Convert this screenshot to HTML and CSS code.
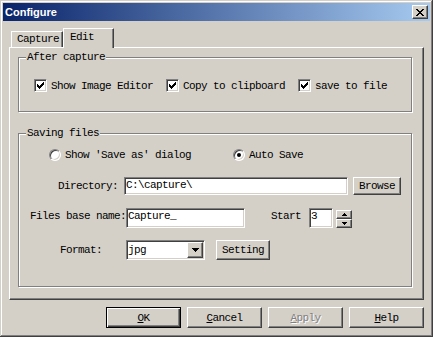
FILE: index.html
```html
<!DOCTYPE html>
<html lang="en">

<head>
    <meta charset="UTF-8">
    <title>Configure</title>
    <link rel="stylesheet" href="styles.css">
</head>

<body>

    <div class="window">

        <div class="titlebar">
            <span class="title">Configure</span>
            <span class="btn close">
                <svg width="8" height="7" viewBox="0 0 8 7" shape-rendering="crispEdges"><path d="M0 0h2v1H0zM6 0h2v1H6zM1 1h2v1H1zM5 1h2v1H5zM2 2h4v1H2zM3 3h2v1H3zM2 4h4v1H2zM1 5h2v1H1zM5 5h2v1H5zM0 6h2v1H0zM6 6h2v1H6z" fill="#000"/></svg>
            </span>
        </div>

        <div class="client">

            <div class="tabs">
                <div class="tab">Capture</div>
                <div class="tab active">Edit</div>
            </div>

            <section class="panel">

                <div class="group g1">
                    <span class="caption">After capture</span>
                    <div class="row checks">
                        <label class="check"><span class="box"><svg width="7" height="7" viewBox="0 0 7 7" shape-rendering="crispEdges"><path d="M0 2h1v1h1v1h1v-1h1v-1h1v-1h1v-1h1v3h-1v1h-1v1h-1v1h-1v1h-1v-1h-1v-1h-1z" fill="#000"/></svg></span>Show Image Editor</label>
                        <label class="check"><span class="box"><svg width="7" height="7" viewBox="0 0 7 7" shape-rendering="crispEdges"><path d="M0 2h1v1h1v1h1v-1h1v-1h1v-1h1v-1h1v3h-1v1h-1v1h-1v1h-1v1h-1v-1h-1v-1h-1z" fill="#000"/></svg></span>Copy to clipboard</label>
                        <label class="check"><span class="box"><svg width="7" height="7" viewBox="0 0 7 7" shape-rendering="crispEdges"><path d="M0 2h1v1h1v1h1v-1h1v-1h1v-1h1v-1h1v3h-1v1h-1v1h-1v1h-1v1h-1v-1h-1v-1h-1z" fill="#000"/></svg></span>save to file</label>
                    </div>
                </div>

                <div class="group g2">
                    <span class="caption">Saving files</span>

                    <div class="row radios">
                        <label class="check"><span class="radio"></span>Show 'Save as' dialog</label>
                        <label class="check"><span class="radio"><span class="dot"></span></span>Auto Save</label>
                    </div>

                    <div class="row r-dir">
                        <span class="lbl w-dir">Directory:</span>
                        <input class="field f-dir" value="C:\capture\">
                        <span class="btn b-browse">Browse</span>
                    </div>

                    <div class="row r-name">
                        <span class="lbl w-name">Files base name:</span>
                        <input class="field f-name" value="Capture_">
                        <span class="lbl w-start">Start</span>
                        <input class="field f-start" value="3">
                        <span class="spin">
                            <span class="btn"><svg width="5" height="3" viewBox="0 0 5 3" shape-rendering="crispEdges"><path d="M2 0h1v1H2zM1 1h3v1H1zM0 2h5v1H0z" fill="#000"/></svg></span>
                            <span class="btn"><svg width="5" height="3" viewBox="0 0 5 3" shape-rendering="crispEdges"><path d="M0 0h5v1H0zM1 1h3v1H1zM2 2h1v1H2z" fill="#000"/></svg></span>
                        </span>
                    </div>

                    <div class="row r-format">
                        <span class="lbl w-format">Format:</span>
                        <div class="field select">
                            <span>jpg</span>
                            <span class="btn drop"><svg width="7" height="4" viewBox="0 0 7 4" shape-rendering="crispEdges"><path d="M0 0h7v1H0zM1 1h5v1H1zM2 2h3v1H2zM3 3h1v1H3z" fill="#000"/></svg></span>
                        </div>
                        <span class="btn b-setting">Setting</span>
                    </div>
                </div>

            </section>

            <footer class="buttons">
                <span class="btn default"><u>O</u>K</span>
                <span class="btn"><u>C</u>ancel</span>
                <span class="btn disabled"><u>A</u>pply</span>
                <span class="btn"><u>H</u>elp</span>
            </footer>

        </div>
    </div>

</body></html>
```

FILE: styles.css
```css
* {
    margin: 0;
    padding: 0;
    box-sizing: border-box;
}

body {
    background: #D4D0C8;
    font-family: "Liberation Mono", monospace;
    font-size: 11px;
    line-height: 12px;
    letter-spacing: -0.6px;
    white-space: nowrap;
    color: #000;
}

.window {
    width: 433px;
    height: 337px;
    padding: 3px;
    background: #D4D0C8;
    box-shadow: inset -1px -1px #404040, inset 1px 1px #D4D0C8, inset -2px -2px #808080, inset 2px 2px #fff;
}

.titlebar {
    height: 18px;
    display: flex;
    align-items: center;
    justify-content: space-between;
    padding: 0 2px;
    background: linear-gradient(to right, #0A246A, #A6CAF0);
}

.title {
    font: bold 11px "Liberation Sans", sans-serif;
    letter-spacing: 0;
    color: #fff;
}

/* raised push button */
.btn {
    display: flex;
    align-items: center;
    justify-content: center;
    background: #D4D0C8;
    border: 1px solid;
    border-color: #fff #404040 #404040 #fff;
    box-shadow: inset -1px -1px #808080;
}

.close {
    width: 16px;
    height: 14px;
}

.client {
    padding: 7px 6px 0;
}

.tabs {
    display: flex;
    align-items: flex-end;
    height: 19px;
    padding-left: 2px;
}

.tab {
    width: 52px;
    height: 16px;
    border: 1px solid;
    border-color: #fff #404040 transparent #fff;
    border-bottom: 0;
    box-shadow: inset -1px 0 #808080;
    padding-left: 5px;
    line-height: 14px;
}

.tab.active {
    width: 51px;
    height: 20px;
    margin-bottom: -1px;
    padding-left: 6px;
    line-height: 16px;
    background: #D4D0C8;
    position: relative;
}

.panel {
    width: 415px;
    height: 253px;
    border: 1px solid;
    border-color: #fff #404040 #404040 #fff;
    box-shadow: inset -1px -1px #808080;
    padding: 9px 0 0 8px;
}

.group {
    position: relative;
    width: 394px;
    border: 1px solid #808080;
    box-shadow: inset 1px 1px #fff, 1px 1px #fff;
}

.g1 {
    height: 55px;
    padding: 21px 0 0 15px;
}

.g2 {
    height: 154px;
    margin-top: 21px;
    padding-top: 14px;
}

.caption {
    position: absolute;
    top: -7px;
    left: 7px;
    padding: 0 1px;
    background: #D4D0C8;
}

.row {
    display: flex;
    align-items: center;
}

.checks {
    height: 13px;
    gap: 13px;
}

.check {
    display: flex;
    align-items: center;
    gap: 4px;
}

/* sunken white boxes */
.box,
.field {
    background: #fff;
    border: 1px solid;
    border-color: #808080 #fff #fff #808080;
    box-shadow: inset 1px 1px #404040, inset -1px -1px #D4D0C8;
}

.box {
    width: 13px;
    height: 13px;
    padding: 2px 0 0 2px;
}

.box svg {
    display: block;
}

.radios {
    height: 13px;
    padding-left: 30px;
    gap: 42px;
}

.radio {
    width: 12px;
    height: 12px;
    border-radius: 50%;
    background: #fff;
    border: 1px solid;
    border-color: #808080 #fff #fff #808080;
    box-shadow: inset 1px 1px #404040, inset -1px -1px #D4D0C8;
    display: flex;
    align-items: center;
    justify-content: center;
}

.dot {
    width: 4px;
    height: 4px;
    border-radius: 50%;
    background: #000;
}

.lbl {
    flex-shrink: 0;
}

.field {
    height: 100%;
    font: inherit;
    letter-spacing: inherit;
    color: #000;
    padding: 0 0 2px 1px;
    outline: none;
}

.r-dir {
    height: 18px;
    margin-top: 16px;
    padding-left: 39px;
}

.w-dir {
    width: 60px;
}

.f-dir {
    width: 224px;
    margin-left: 6px;
}

.b-browse {
    width: 48px;
    height: 18px;
    margin-left: 5px;
}

.r-name {
    height: 20px;
    margin-top: 13px;
    padding-left: 11px;
}

.r-name .lbl {
    align-self: flex-start;
    padding-top: 2px;
}

.r-name .field {
    padding-bottom: 4px;
}

.w-name {
    width: 96px;
}

.f-name {
    width: 119px;
}

.w-start {
    width: 30px;
    margin-left: 26px;
}

.f-start {
    width: 24px;
    margin-left: 8px;
}

.spin {
    display: flex;
    flex-direction: column;
    width: 16px;
    height: 18px;
    margin-left: 3px;
    align-self: flex-end;
}

.spin .btn {
    height: 9px;
}

.r-format {
    height: 20px;
    margin-top: 12px;
    padding-left: 41px;
}

.w-format {
    width: 66px;
}

.select {
    width: 79px;
    display: flex;
    align-items: center;
    justify-content: space-between;
    padding: 0 0 0 1px;
}

.drop {
    width: 16px;
    height: 16px;
    margin-right: 1px;
}

.b-setting {
    width: 54px;
    height: 20px;
    margin-left: 11px;
}

.buttons {
    display: flex;
    justify-content: flex-end;
    gap: 6px;
    margin-top: 7px;
}

.buttons .btn {
    width: 75px;
    height: 21px;
}

.buttons .default {
    border-color: #000;
    box-shadow: inset 1px 1px #fff, inset -1px -1px #404040, inset -2px -2px #808080;
}

.disabled {
    color: #808080;
    text-shadow: 1px 1px #fff;
}
```
